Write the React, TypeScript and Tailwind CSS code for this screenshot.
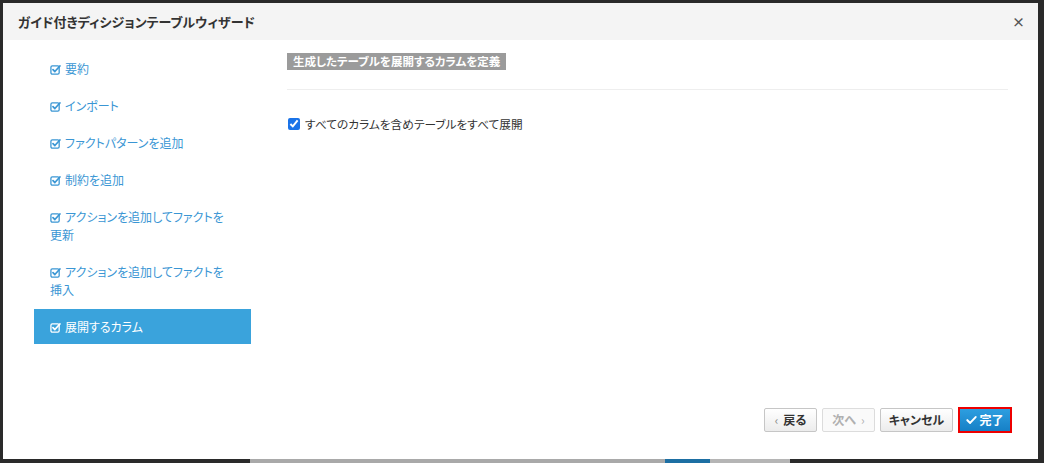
import React from "react";

const steps = [
  { label: "要約" },
  { label: "インポート" },
  { label: "ファクトパターンを追加" },
  { label: "制約を追加" },
  { label: "アクションを追加してファクトを更新" },
  { label: "アクションを追加してファクトを挿入" },
  { label: "展開するカラム", active: true },
];

function CheckSquare() {
  return (
    <svg width="11" height="11" viewBox="0 0 12 12" className="inline-block align-[-1px] mr-[4px]">
      <rect x="1" y="2" width="9" height="9" rx="1.5" fill="none" stroke="currentColor" strokeWidth="1.4" />
      <path d="M3.3 6.2 L5.3 8.2 L10.8 2.2" fill="none" stroke="currentColor" strokeWidth="1.9" strokeLinecap="round" strokeLinejoin="round" />
    </svg>
  );
}

export default function App() {
  return (
    <div
      className="w-[1044px] h-[463px] bg-[#2a2a2a] flex flex-col overflow-hidden [font-feature-settings:'palt']"
      style={{ fontFamily: "'Noto Sans CJK JP', 'Noto Sans', 'Liberation Sans', sans-serif" }}
    >
      <div className="flex-1 flex pl-[3px] pr-[6px] pt-[3px]">
        <div className="flex-1 bg-white flex flex-col">
          {/* header */}
          <div className="h-[37px] bg-[#f4f4f4] flex items-center justify-between pl-[15px] pr-[13px]">
            <h1 className="text-[13px] font-bold text-[#333]">ガイド付きディシジョンテーブルウィザード</h1>
            <span className="text-[#555] text-[13px] font-bold leading-none">×</span>
          </div>

          {/* body */}
          <div className="flex-1 flex">
            <div className="w-[284px] pl-[31px] pr-[36px] pt-[11px] flex flex-col gap-[2px]">
              {steps.map((s) => (
                <div
                  key={s.label}
                  className={`py-[8.5px] pl-[16px] pr-[24px] text-[12px] leading-[18px] ${
                    s.active ? "bg-[#3aa3dc] text-white" : "text-[#3a96d4]"
                  }`}
                >
                  <CheckSquare />
                  {s.label}
                </div>
              ))}
            </div>

            <div className="flex-1 flex flex-col pr-[30px] pt-[12px] pb-[26px]">
              <div className="-mt-[5px]">
                <span className="inline-block bg-[#9b9b9b] text-white font-bold text-[11.5px] leading-[17px] px-[6px]">
                  生成したテーブルを展開するカラムを定義
                </span>
              </div>
              <div className="border-t border-[#eeeeee] mt-[18px]" />
              <label className="flex items-center mt-[25px] text-[11.7px] text-[#333]">
                <input type="checkbox" defaultChecked className="w-[12px] h-[12px] m-0 ml-[1px] mr-[5px] accent-[#1a73e8]" />
                すべてのカラムを含めテーブルをすべて展開
              </label>

              <div className="mt-auto flex justify-end gap-[5px] items-center -mr-[4px]">
                <button className="h-[24px] w-[53px] justify-center border border-[#c6c6c6] bg-gradient-to-b from-white to-[#ececec] rounded-[2px] text-[12px] font-bold text-[#333] flex items-center">
                  <span className="text-[#888] mr-[5px] font-normal">‹</span>戻る
                </button>
                <button className="h-[24px] w-[53px] justify-center border border-[#dcdcdc] bg-[#fafafa] rounded-[2px] text-[12px] font-bold text-[#b0b0b0] flex items-center">
                  次へ<span className="ml-[5px] font-normal">›</span>
                </button>
                <button className="h-[24px] w-[73px] border border-[#c6c6c6] bg-gradient-to-b from-white to-[#ececec] rounded-[2px] text-[12px] font-bold text-[#333]">
                  キャンセル
                </button>
                <div className="border-2 border-[#ee0000]">
                  <button className="h-[22px] w-[50px] justify-center bg-gradient-to-b from-[#2d9ee0] to-[#1680c6] text-[12px] font-bold text-white flex items-center">
                    <svg width="11" height="10" viewBox="0 0 12 10" className="mr-[2px]">
                      <path d="M1.5 5.2 L4.5 8.2 L10.5 1.8" fill="none" stroke="white" strokeWidth="2.2" strokeLinecap="round" strokeLinejoin="round" />
                    </svg>
                    完了
                  </button>
                </div>
              </div>
            </div>
          </div>
        </div>
      </div>
      <div className="h-[4px] flex">
        <div className="w-[250px] bg-[#2a2a2a]" />
        <div className="w-[415px] bg-[#a9a9a9]" />
        <div className="w-[45px] bg-[#1d6fa3]" />
        <div className="w-[80px] bg-[#b5b5b5]" />
        <div className="flex-1 bg-[#2a2a2a]" />
      </div>
    </div>
  );
}
